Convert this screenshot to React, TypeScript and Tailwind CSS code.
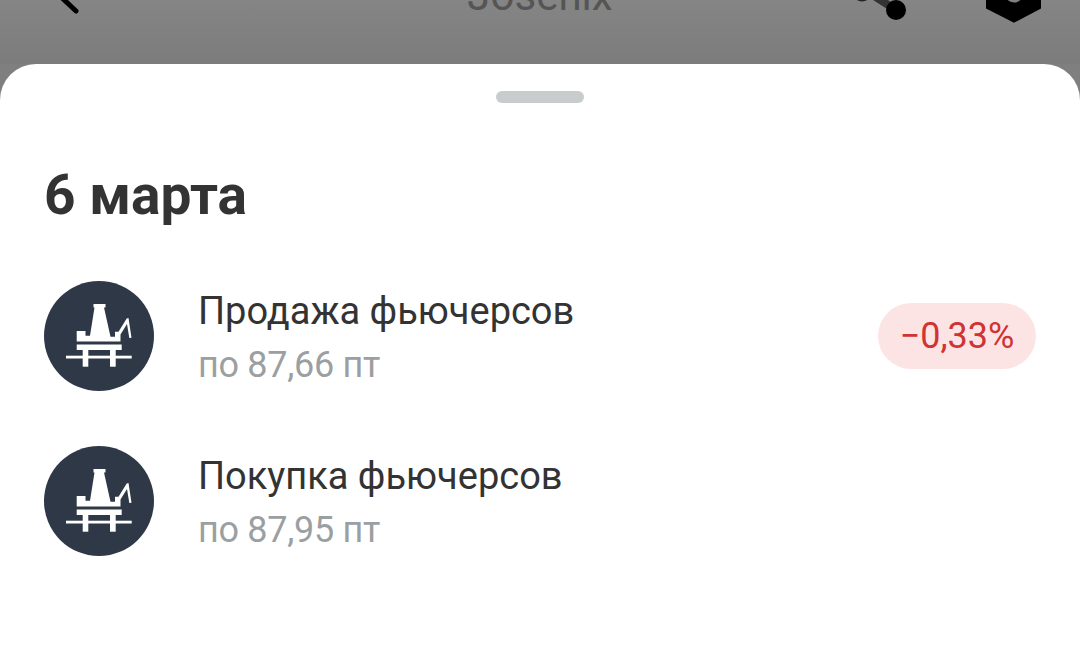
import React from "react"

const RigIcon = () => (
  <svg viewBox="0 0 110 110" className="w-[110px] h-[110px] block shrink-0">
    <circle cx="55" cy="55" r="55" fill="#2e3847" />
    <g fill="#fff">
      <path d="M49.500 23h12v3.500h-1.500L66.500 55.700H71V50.700H74.500L82.700 37.500L84.500 37L87.500 56.700 85.300 57 83 43 76.500 53.500V60.500H32.700V50H41.500V54.700H46L50.500 26.500H49.500z" />
      <rect x="32.700" y="63.500" width="45" height="5.500" />
      <rect x="38.700" y="69" width="5.600" height="16.700" />
      <rect x="66" y="69" width="5.700" height="16.700" />
      <rect x="22" y="74.700" width="65.700" height="2.800" />
    </g>
  </svg>
)

const rows = [
  { id: 1, title: "Продажа фьючерсов", price: "по 87,66 пт", change: "−0,33%" },
  { id: 2, title: "Покупка фьючерсов", price: "по 87,95 пт", change: "" },
]

export default function App() {
  return (
    <div className="h-[671px] w-[1080px] flex flex-col overflow-hidden bg-[#7f7f7f] font-['Roboto',sans-serif]">
      {/* затемнённая шапка, срезана сверху */}
      <div className="h-16 shrink-0 relative overflow-hidden bg-gradient-to-b from-[#858585] to-[#7c7c7c]">
        <svg viewBox="0 0 40 40" className="absolute left-[50px] -top-[18px] w-10 h-10">
          <path d="M10 14L26 29" stroke="#000" strokeWidth="5" strokeLinecap="round" fill="none" />
        </svg>
        <div className="text-center text-[42px] leading-none text-[#555] -mt-[25px]">Josenix</div>
        <svg viewBox="0 0 70 40" className="absolute left-[850px] top-0 w-[70px] h-10">
          <circle cx="12" cy="-8" r="9.500" fill="#222" />
          <path d="M18 -8L46 10" stroke="#333" strokeWidth="8" fill="none" />
          <circle cx="46" cy="10" r="10" fill="#000" />
        </svg>
        <svg viewBox="0 0 60 30" className="absolute left-[984px] top-0 w-[60px] h-[30px]">
          <path d="M2 0v8.500L30 22.700 57 8.500V0z" fill="#000" />
          <circle cx="30" cy="-7" r="9.500" fill="#808080" />
        </svg>
      </div>

      {/* нижний лист */}
      <div className="flex-1 bg-white rounded-t-[36px] pt-[27px] px-11">
        <div className="w-[88px] h-3 rounded-full bg-[#c8cccd] mx-auto" />
        <h2 className="mt-[65px] text-[55px] leading-[54px] font-bold text-[#333]">6 марта</h2>
        <div className="mt-[59px] flex flex-col gap-[55px]">
          {rows.map((row) => (
            <div key={row.id} className="flex items-center h-[110px]">
              <RigIcon />
              <div className="ml-[44px] flex-1 pt-[3px]">
                <div className="text-[38px] leading-[42px] text-[#333]">{row.title}</div>
                <div className="mt-[12px] text-[36px] leading-[42px] tracking-[-0.3px] text-[#9c9fa1]">{row.price}</div>
              </div>
              {row.change && (
                <div className="w-[158px] h-[66px] rounded-full bg-[#fde4e4] flex items-center justify-center text-[36px] text-[#cf3333]">
                  {row.change}
                </div>
              )}
            </div>
          ))}
        </div>
      </div>
    </div>
  )
}
